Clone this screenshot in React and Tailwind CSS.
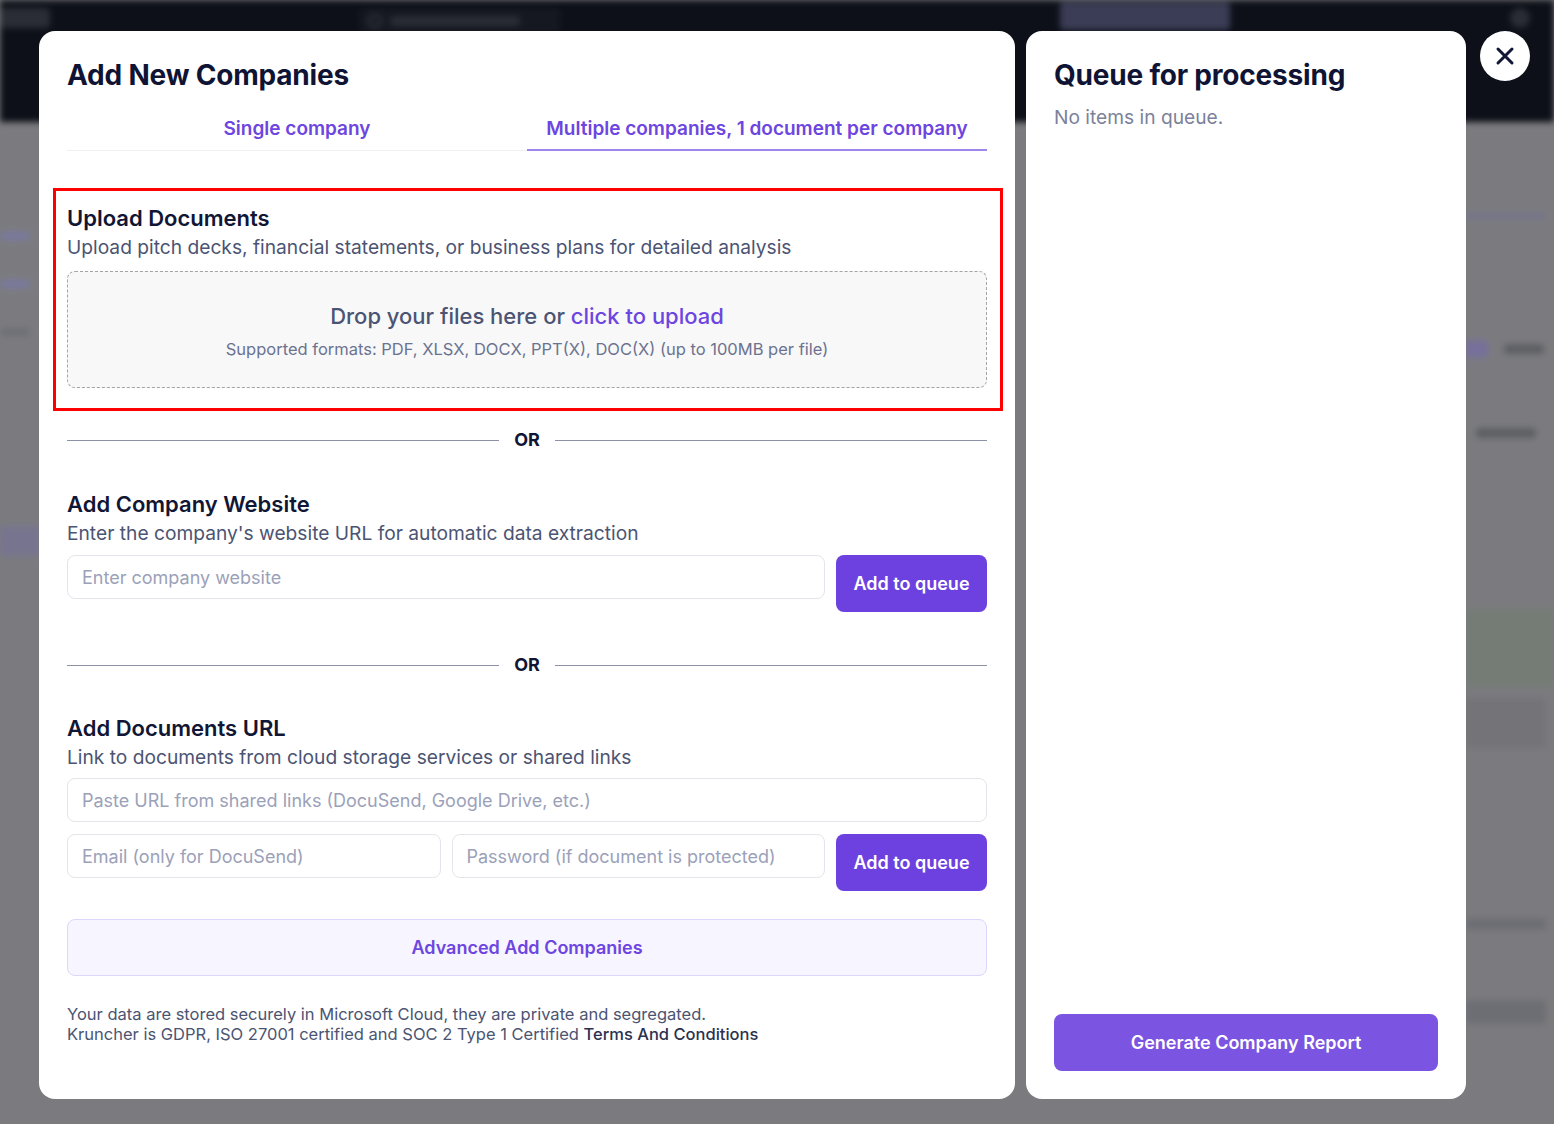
import React from "react";

function Divider() {
  return (
    <div className="flex items-center gap-[15px]">
      <div className="h-px flex-1 bg-[#8d91a6]" />
      <span className="text-[18px] leading-[24px] font-bold text-[#111634]">OR</span>
      <div className="h-px flex-1 bg-[#8d91a6]" />
    </div>
  );
}

function Input({ placeholder, className = "" }) {
  return (
    <div
      className={
        "h-[44px] rounded-[8px] border border-[#e4e5ea] bg-white px-[14px] flex items-center text-[18px] text-[#9ba1b9] " +
        className
      }
    >
      {placeholder}
    </div>
  );
}

function PrimaryButton({ children, className = "" }) {
  return (
    <button
      className={
        "h-[57px] rounded-[8px] bg-[#6c41df] text-white text-[18px] font-semibold flex items-center justify-center " +
        className
      }
    >
      {children}
    </button>
  );
}

export default function App() {
  return (
    <div
      className="relative w-full h-[1124px] overflow-hidden bg-[#7b7b7f]"
      style={{ fontFamily: "Inter, 'Noto Sans', sans-serif" }}
    >
      {/* Backdrop app (dimmed & blurred) */}
      <div className="flex flex-col h-full blur-[3px]">
        <div className="h-[122px] bg-[#0d1018] flex items-start pt-[8px] gap-[10px]">
          <div className="w-[50px] h-[20px] bg-[#2a2d35] rounded" />
          <div className="ml-[300px] w-[200px] h-[26px] rounded bg-[#151821] flex items-center gap-2 px-2">
            <div className="w-[14px] h-[14px] rounded-full border-2 border-[#3a3d45]" />
            <div className="w-[130px] h-[10px] bg-[#2a2d35] rounded" />
          </div>
          <div className="ml-[490px] w-[170px] h-[28px] -mt-[6px] rounded bg-[#3b3d56]" />
          <div className="ml-[270px] w-[20px] h-[20px] rounded-full bg-[#2a2d35]" />
        </div>
        <div className="flex-1 bg-[#7b7b7f] flex">
          <div className="w-[40px] flex flex-col gap-[40px] pt-[110px]">
            <div className="w-[30px] h-[8px] rounded bg-[#7a78a0]" />
            <div className="w-[30px] h-[8px] rounded bg-[#7a78a0]" />
            <div className="w-[30px] h-[8px] rounded bg-[#6e6f75]" />
            <div className="mt-[150px] w-[40px] h-[30px] rounded bg-[#77748f]" />
          </div>
          <div className="flex-1" />
          <div className="w-[88px] flex flex-col pt-[90px]">
            <div className="w-[80px] h-[8px] rounded bg-[#75768a]" />
            <div className="mt-[120px] flex items-center gap-4">
              <div className="w-[22px] h-[18px] rounded bg-[#76709a]" />
              <div className="w-[40px] h-[10px] rounded bg-[#5d5e63]" />
            </div>
            <div className="mt-[70px] ml-[10px] w-[60px] h-[10px] rounded bg-[#5d5e63]" />
            <div className="mt-[170px] h-[80px] bg-[#757c76]" />
            <div className="mt-[10px] w-[80px] h-[50px] rounded bg-[#737378]" />
            <div className="mt-[170px] w-[80px] h-[12px] rounded bg-[#6d6e73]" />
            <div className="mt-[70px] w-[80px] h-[24px] rounded bg-[#6d6e73]" />
          </div>
        </div>
      </div>

      {/* Modal overlay */}
      <div className="absolute inset-0 flex items-start pl-[39px] pt-[31px]">
        {/* Left modal */}
        <div className="w-[976px] h-[1068px] bg-white rounded-[16px] px-[28px] pt-[28px] flex flex-col">
          <h1 className="text-[28px] leading-[32px] font-bold text-[#0f1434] tracking-[-0.2px]">
            Add New Companies
          </h1>

          <div className="mt-[23px] flex border-b border-[#f0f0f3]">
            <div className="flex-1 text-center text-[19px] leading-[28px] font-semibold text-[#6d45e0] pt-[1px] pb-[7px]">
              Single company
            </div>
            <div className="flex-1 text-center text-[19px] leading-[28px] font-semibold text-[#6d45e0] pt-[1px] pb-[6px] border-b-2 border-[#9f86ee] -mb-px">
              Multiple companies, 1 document per company
            </div>
          </div>

          {/* Upload documents (highlighted) */}
          <div className="mt-[37px] -ml-[14px] -mr-[16px] border-[3px] border-[#ff0000] pl-[11px] pr-[13px] pt-[13px] pb-[20px]">
            <h2 className="text-[22px] leading-[28px] font-semibold text-[#111634]">Upload Documents</h2>
            <p className="text-[19.2px] leading-[30px] text-[#4b5472]">
              Upload pitch decks, financial statements, or business plans for detailed analysis
            </p>
            <div className="mt-[9px] h-[117px] rounded-[8px] border border-dashed border-[#a3a3a8] bg-[#f8f8f9] flex flex-col items-center justify-center pt-[4px]">
              <div className="text-[22px] leading-[28px] font-medium text-[#4b5472]">
                Drop your files here or <span className="text-[#6d45e0]">click to upload</span>
              </div>
              <div className="mt-[7px] text-[16.5px] leading-[24px] text-[#6b7390]">
                Supported formats: PDF, XLSX, DOCX, PPT(X), DOC(X) (up to 100MB per file)
              </div>
            </div>
          </div>

          <div className="mt-[17px]">
            <Divider />
          </div>

          {/* Company website */}
          <h2 className="mt-[38px] text-[22px] leading-[28px] font-semibold text-[#111634]">Add Company Website</h2>
          <p className="text-[19.2px] leading-[30px] text-[#4b5472]">
            Enter the company's website URL for automatic data extraction
          </p>
          <div className="mt-[7px] flex items-start gap-[11px]">
            <Input placeholder="Enter company website" className="flex-1" />
            <PrimaryButton className="w-[151px]">Add to queue</PrimaryButton>
          </div>

          <div className="mt-[41px]">
            <Divider />
          </div>

          {/* Documents URL */}
          <h2 className="mt-[37px] text-[22px] leading-[28px] font-semibold text-[#111634]">Add Documents URL</h2>
          <p className="text-[19.2px] leading-[30px] text-[#4b5472]">
            Link to documents from cloud storage services or shared links
          </p>
          <Input placeholder="Paste URL from shared links (DocuSend, Google Drive, etc.)" className="mt-[6px]" />
          <div className="mt-[12px] flex items-start gap-[11px]">
            <Input placeholder="Email (only for DocuSend)" className="flex-1" />
            <Input placeholder="Password (if document is protected)" className="flex-1" />
            <PrimaryButton className="w-[151px]">Add to queue</PrimaryButton>
          </div>

          <button className="mt-[28px] h-[57px] rounded-[8px] border border-[#ddd5fb] bg-[#f7f5ff] text-[18px] font-semibold text-[#6d45e0] flex items-center justify-center">
            Advanced Add Companies
          </button>

          <div className="mt-[28px] text-[16.5px] leading-[20px] text-[#4b5472]">
            <p>Your data are stored securely in Microsoft Cloud, they are private and segregated.</p>
            <p>
              Kruncher is GDPR, ISO 27001 certified and SOC 2 Type 1 Certified{" "}
              <span className="font-medium text-[#2b3150]">Terms And Conditions</span>
            </p>
          </div>
        </div>

        {/* Right panel */}
        <div className="ml-[11px] w-[440px] h-[1068px] bg-white rounded-[16px] px-[28px] pt-[28px] pb-[28px] flex flex-col">
          <h2 className="text-[28px] leading-[32px] font-bold text-[#0f1434] tracking-[-0.2px]">
            Queue for processing
          </h2>
          <p className="mt-[12px] text-[19.2px] leading-[28px] text-[#7b819b]">No items in queue.</p>
          <div className="flex-1" />
          <button className="h-[57px] w-full rounded-[8px] bg-[#7b55e1] text-white text-[18px] font-semibold flex items-center justify-center">
            Generate Company Report
          </button>
        </div>

        {/* Close button */}
        <button className="ml-[14px] w-[50px] h-[50px] rounded-full bg-white flex items-center justify-center">
          <svg width="20" height="20" viewBox="0 0 20 20" fill="none">
            <path d="M3 3L17 17M17 3L3 17" stroke="#111634" strokeWidth="3" strokeLinecap="round" />
          </svg>
        </button>
      </div>
    </div>
  );
}
